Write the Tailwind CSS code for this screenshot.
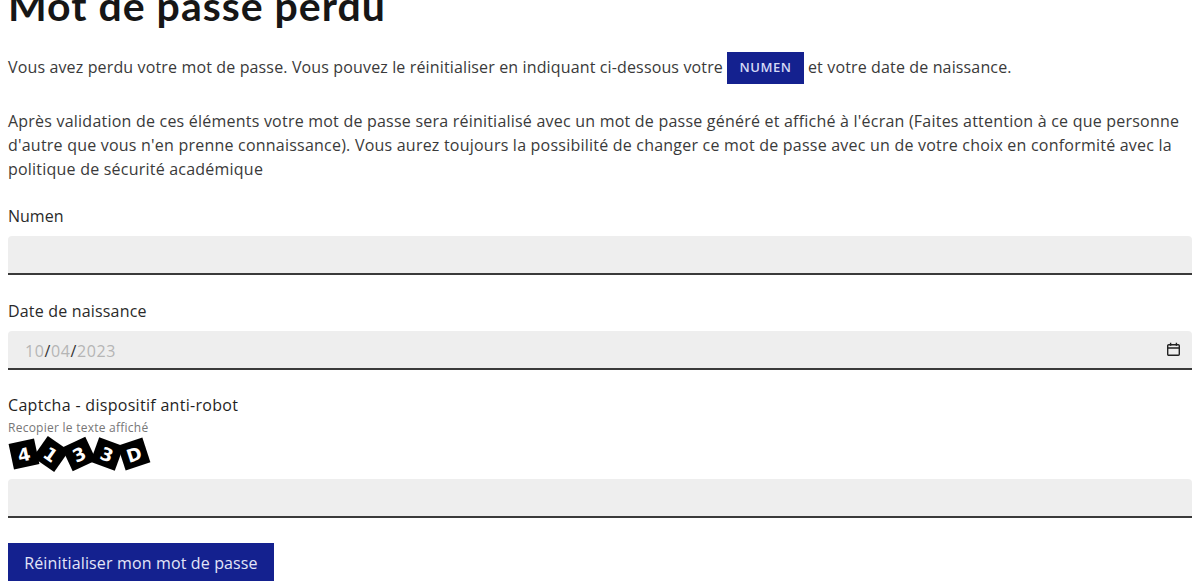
<!DOCTYPE html>
<html lang="fr">
<head>
  <meta charset="UTF-8">
  <title>Mot de passe perdu</title>
  <script src="https://cdn.jsdelivr.net/npm/@tailwindcss/browser@4"></script>
</head>
<body class="h-[581px] overflow-hidden bg-white font-['Open_Sans','Noto_Sans',sans-serif] text-[#3a3a3a]">
  <main class="px-2">
    <h1 class="mt-[-18px] font-['Lato',sans-serif] text-[41px] leading-[48px] font-bold tracking-[1px] text-[#161616]">Mot de passe perdu</h1>

    <p class="mt-[21px] flex h-[32px] items-center text-[16px] tracking-[0.14px] whitespace-nowrap">
      Vous avez perdu votre mot de passe. Vous pouvez le réinitialiser en indiquant ci-dessous votre
      <span class="mx-[4px] flex h-[32px] w-[77px] translate-y-[1px] items-center justify-center bg-[#14218f] text-[13px] font-semibold tracking-[0.5px] text-[#d5d9f5]">NUMEN</span>
      et votre date de naissance.
    </p>

    <p class="mt-[26px] text-[16px] leading-[24px] tracking-[0.22px]">Après validation de ces éléments votre mot de passe sera réinitialisé avec un mot de passe généré et affiché à l'écran (Faites attention à ce que personne d'autre que vous n'en prenne connaissance). Vous aurez toujours la possibilité de changer ce mot de passe avec un de votre choix en conformité avec la politique de sécurité académique</p>

    <form class="mt-[23px]">
      <label class="block text-[16px] leading-[24px] text-[#2a2a2a]">Numen</label>
      <div class="mt-[8px] h-[39px] rounded-t-[4px] border-b-2 border-[#3a3a3a] bg-[#eeeeee]"></div>

      <label class="mt-[24px] block text-[16px] leading-[24px] tracking-[0.18px] text-[#2a2a2a]">Date de naissance</label>
      <div class="mt-[8px] flex h-[39px] items-center justify-between rounded-t-[4px] border-b-2 border-[#3a3a3a] bg-[#eeeeee] pt-[2px] pr-[11px] pl-[17px]">
        <span class="text-[16px] tracking-[0.6px] text-[#b5b5b5]">10<span class="text-[#333333]">/</span>04<span class="text-[#333333]">/</span>2023</span>
        <svg class="mb-[2px] h-[15px] w-[15px]" viewBox="0 0 15 15" fill="none" stroke="#222222" stroke-width="1.4">
          <rect x="1.7" y="2.7" width="11.6" height="10.6" rx="1"/>
          <path d="M1.7 6h11.6M4.6 0.8v3M10.4 0.8v3"/>
        </svg>
      </div>

      <label class="mt-[23px] block text-[16px] leading-[24px] tracking-[0.3px] text-[#1f1f1f]">Captcha - dispositif anti-robot</label>
      <p class="mt-[4px] text-[12px] leading-[14px] tracking-[0.25px] text-[#777777]">Recopier le texte affiché</p>
      <div class="mt-[3px] flex h-[32px] items-center pl-[3px] font-['DejaVu_Sans',sans-serif] text-[18px] font-bold text-white">
        <span class="flex h-[26px] w-[26px] shrink-0 -rotate-12 items-center justify-center bg-black">4</span>
        <span class="ml-[1px] flex h-[26px] w-[26px] shrink-0 rotate-[35deg] items-center justify-center bg-black">1</span>
        <span class="ml-[2px] flex h-[26px] w-[26px] shrink-0 rotate-[-25deg] items-center justify-center bg-black">3</span>
        <span class="ml-[2px] flex h-[26px] w-[26px] shrink-0 rotate-[20deg] items-center justify-center bg-black">3</span>
        <span class="ml-[1px] flex h-[26px] w-[26px] shrink-0 rotate-[-18deg] items-center justify-center bg-black">D</span>
      </div>
      <div class="mt-[9px] h-[39px] rounded-t-[4px] border-b-2 border-[#3a3a3a] bg-[#eeeeee]"></div>

      <button type="button" class="mt-[25px] h-[40px] w-[266px] bg-[#14218f] text-[16px] tracking-[0.14px] text-[#e3e5f8]">Réinitialiser mon mot de passe</button>
    </form>
  </main>
</body>
</html>
